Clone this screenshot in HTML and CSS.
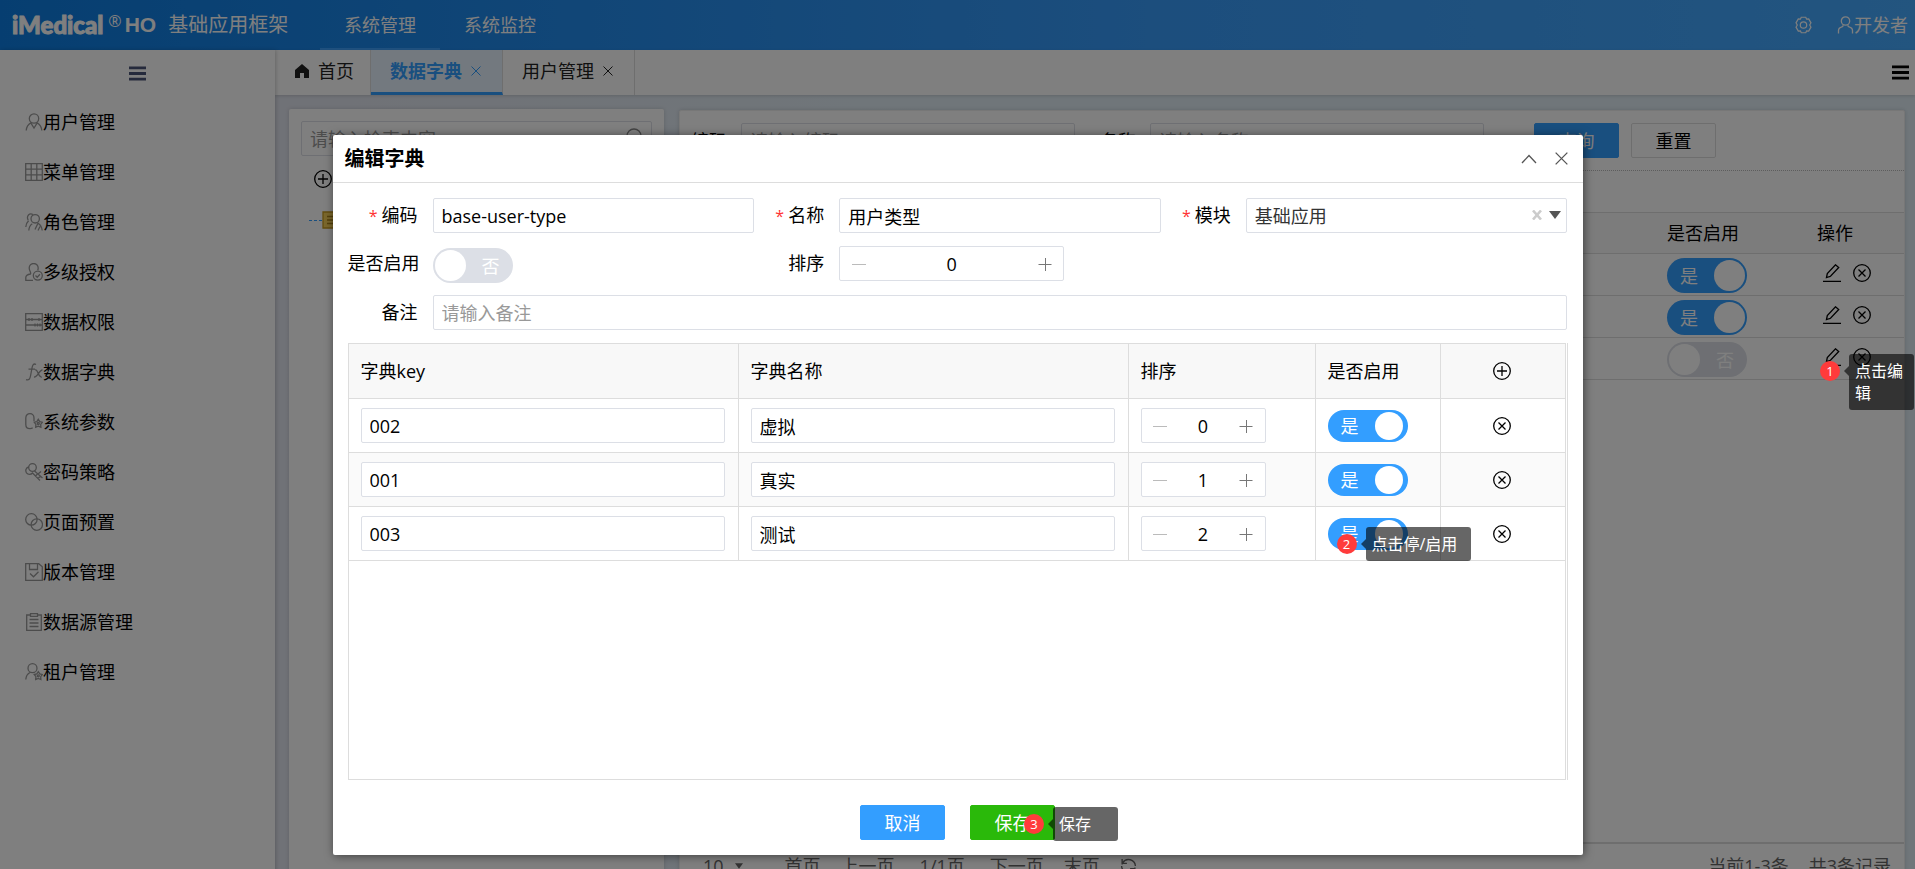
FILE: index.html
```html
<!DOCTYPE html>
<html lang="zh-CN">
<head>
<meta charset="utf-8">
<title>基础应用框架</title>
<link rel="stylesheet" href="styles.css">
</head>
<body>
<svg class="sprite" aria-hidden="true">
  <symbol id="i-user" viewBox="0 0 18 18"><circle cx="9" cy="5.5" r="4.7"/><path d="M1.2 17.5c.4-4 2.200-6.300 4.600-7.600L9 15l3.200-5.100c2.400 1.300 4.200 3.600 4.600 7.600"/></symbol>
  <symbol id="i-grid" viewBox="0 0 18 18"><path d="M.7.7h16.600v16.600H.7zM.7 6.200h16.600M.7 11.800h16.600M6.200.7v16.600M11.800.7v16.600"/></symbol>
  <symbol id="i-roles" viewBox="0 0 18 18"><circle cx="10.200" cy="5.800" r="4.200"/><path d="M3.800 17.500c.2-3.500 1.500-5.500 3.500-6.800M10 16.500l3-6.300c2.200 1.300 3.800 3.600 4.200 7.300M13 17.500l2-4M8 1.500C4.500-.5 1 3 3.200 7.200M.8 14c.3-3 1.200-4.800 2.800-6.200"/></symbol>
  <symbol id="i-auth" viewBox="0 0 18 18"><path d="M8 17.300H.8v-2.800c0-2 1.500-3 4.700-3.500C6.500 9.500 4.200 8 4.200 5a4.500 4.500 0 0 1 9 0c0 .8-.2 1.500-.4 2.200"/><circle cx="12.800" cy="12.600" r="4.500"/><path d="M10.500 12.500l1.700 1.700 2.800-3"/></symbol>
  <symbol id="i-data" viewBox="0 0 18 18"><path d="M.7.7h16.600v16.600H.7zM.7 6.500h16.600M.7 12h16.600M4 5v3M7 5v3M14 5v3M10 10.500v3M12.500 10.500v3M15 10.500v3"/></symbol>
  <symbol id="i-fx" viewBox="0 0 18 18"><path d="M11 1.500C8.500 0 7.500 2 7 5L5.500 13c-.5 3-1.500 4.500-4.500 3.600M3.500 6.200H10M10 7c3-1.500 3 8 6.800 7M17.500 7c-3-.5-5 7.500-8.500 7"/></symbol>
  <symbol id="i-param" viewBox="0 0 18 18"><path d="M9 8V5c0-2.700-1.600-4.300-4-4.300S.8 2.300.8 5v6.500c0 2.700 1.600 4.200 4.200 4.200 1.200 0 2-.3 2.700-.9"/><path d="M13.300 6.300l1.500 2.300 2.600.6-1.700 2.200.2 2.800-2.600-1-2.600 1 .2-2.800-1.700-2.200 2.600-.6z"/><circle cx="13.300" cy="10.500" r="1"/></symbol>
  <symbol id="i-key" viewBox="0 0 18 18"><circle cx="7.500" cy="4.500" r="3.800"/><path d="M9.500 8L17.500 15M13 11l3-2.500M4 4C1 4.500 0 7.500 1.500 9.800c1.500 2 4.500 2 6 .2l7.500 7.500M10.500 13l2.500-2.500M13 15.500l2.300-2.300"/></symbol>
  <symbol id="i-rings" viewBox="0 0 18 18"><circle cx="6.400" cy="6.400" r="5.700"/><circle cx="11.800" cy="11.600" r="5.700"/></symbol>
  <symbol id="i-save" viewBox="0 0 18 18"><path d="M.7.7h13l3.600 3v13.600H.7zM4.500.7v5.800h8V.7M5 10.500l3.500 3.300 5-5"/></symbol>
  <symbol id="i-clip" viewBox="0 0 18 18"><path d="M5.500 2H1.700v15.300h14.600V2h-3.800M5.500.7h7v2.600h-7zM4.500 6.500h9M4.500 10h9M4.500 13.500h9"/></symbol>
  <symbol id="i-tenant" viewBox="0 0 18 18"><circle cx="7.500" cy="5.200" r="4.500"/><path d="M.8 16.500c.2-3.500 1.500-5.500 4.200-7M13.300 8.600l1.500 2.300 2.600.6-1.700 2.200.2 2.800-2.600-1-2.600 1 .2-2.800-1.700-2.200 2.600-.6z"/><circle cx="13.300" cy="12.800" r="1"/></symbol>
  <symbol id="i-plus-o" viewBox="0 0 18 18"><circle cx="9" cy="9" r="8.300"/><path d="M9 4v10M4 9h10"/></symbol>
  <symbol id="i-x-o" viewBox="0 0 18 18"><circle cx="9" cy="9" r="8.300"/><path d="M5.500 5.500l7 7M12.500 5.500l-7 7"/></symbol>
  <symbol id="i-edit" viewBox="0 0 18 18"><path d="M0 17.300h18M3.500 13.500l.8-4L12.500.8l3.200 2.700-8.200 8.800zM3.500 13.500l4-1.200"/></symbol>
  <symbol id="i-x" viewBox="0 0 10 10"><path d="M.5.5l9 9M9.500.5l-9 9"/></symbol>
  <symbol id="i-clear" viewBox="0 0 10 10"><path stroke-width="2.600" d="M1 0.500l8 9M9 0.500l-8 9"/></symbol>
  <symbol id="i-up" viewBox="0 0 16 10"><path d="M1 9l7-7.500L15 9"/></symbol>
  <symbol id="i-bars" viewBox="0 0 18 15"><path d="M0 1.500h18M0 7.500h18M0 13.500h18"/></symbol>
  <symbol id="i-home" viewBox="0 0 14 14"><path d="M7 0L0 6v8h5V9h4v5h5V6z"/></symbol>
  <symbol id="i-minus" viewBox="0 0 14 14"><path d="M0 7.500h14"/></symbol>
  <symbol id="i-plus" viewBox="0 0 14 14"><path d="M.5 7.500h13M7.500 1v13"/></symbol>
  <symbol id="i-caret" viewBox="0 0 12 8"><path d="M0 0h12L6 8z"/></symbol>
  <symbol id="i-gear" viewBox="0 0 18 18"><path d="M6.600.8h4.800l.9 2 2.200-.2 2.400 4.100L15.600 9l1.300 2.300-2.400 4.100-2.200-.2-.9 2H6.600l-.9-2-2.200.2-2.400-4.100L2.400 9 1.100 6.700l2.400-4.100 2.200.2z"/><circle cx="9" cy="9" r="3.400"/></symbol>
  <symbol id="i-person" viewBox="0 0 16 18"><circle cx="8" cy="5" r="4.200"/><path d="M1 17.500v-3c0-2 1.500-3.200 3.500-3.700L6 9.500M15 17.500v-3c0-2-1.500-3.200-3.500-3.700L10 9.500"/></symbol>
  <symbol id="i-search" viewBox="0 0 18 18"><circle cx="8" cy="8" r="7"/><path d="M13 13l4.500 4.500"/></symbol>
  <symbol id="i-refresh" viewBox="0 0 16 16"><path d="M2 6.500V1.500M2 5.500h4.500M2.500 5A6.500 6.500 0 0 1 14.500 8M14 9.500v5M14 10.500H9.500M13.500 11A6.500 6.500 0 0 1 1.500 8"/></symbol>
  <symbol id="i-folder" viewBox="0 0 20 18"><path class="folder-back" d="M1 1h18v16H1z"/><path class="folder-lines" d="M5 5.500h10M5 9h10M5 12.500h10"/></symbol>
</svg>

<div class="app">
  <header class="topbar">
    <div class="brand"><span class="brand-name">iMedical</span><sup class="brand-reg">®</sup><span class="brand-sub">HO</span><span class="brand-title">基础应用框架</span></div>
    <nav class="topnav"><a class="on" href="#">系统管理</a><a href="#">系统监控</a></nav>
    <div class="top-tools">
      <button class="plain" aria-label="设置"><svg class="ico16"><use href="#i-gear"/></svg></button>
      <a class="account" href="#"><svg class="ico16"><use href="#i-person"/></svg>开发者</a>
    </div>
  </header>

  <div class="main">
    <aside class="sidebar">
      <button class="plain side-toggle" aria-label="折叠菜单"><svg class="bars"><use href="#i-bars"/></svg></button>
      <nav class="side-nav">
        <a href="#"><svg class="ico"><use href="#i-user"/></svg>用户管理</a>
        <a href="#"><svg class="ico"><use href="#i-grid"/></svg>菜单管理</a>
        <a href="#"><svg class="ico"><use href="#i-roles"/></svg>角色管理</a>
        <a href="#"><svg class="ico"><use href="#i-auth"/></svg>多级授权</a>
        <a href="#"><svg class="ico"><use href="#i-data"/></svg>数据权限</a>
        <a href="#"><svg class="ico"><use href="#i-fx"/></svg>数据字典</a>
        <a href="#"><svg class="ico"><use href="#i-param"/></svg>系统参数</a>
        <a href="#"><svg class="ico"><use href="#i-key"/></svg>密码策略</a>
        <a href="#"><svg class="ico"><use href="#i-rings"/></svg>页面预置</a>
        <a href="#"><svg class="ico"><use href="#i-save"/></svg>版本管理</a>
        <a href="#"><svg class="ico"><use href="#i-clip"/></svg>数据源管理</a>
        <a href="#"><svg class="ico"><use href="#i-tenant"/></svg>租户管理</a>
      </nav>
    </aside>

    <div class="workspace">
      <div class="tabs">
        <a class="tab home" href="#"><svg class="ico-home"><use href="#i-home"/></svg>首页</a>
        <a class="tab active" href="#">数据字典<svg class="ico-x"><use href="#i-x"/></svg></a>
        <a class="tab" href="#">用户管理<svg class="ico-x"><use href="#i-x"/></svg></a>
        <button class="plain tabs-menu" aria-label="标签菜单"><svg class="bars"><use href="#i-bars"/></svg></button>
      </div>

      <div class="panels">
        <section class="panel tree-panel">
          <div class="search"><input class="field" type="text" placeholder="请输入检索内容" aria-label="检索"><svg class="ico"><use href="#i-search"/></svg></div>
          <button class="plain tree-add" aria-label="新增"><svg class="ico"><use href="#i-plus-o"/></svg></button>
          <div class="tree-node"><svg class="ico-folder"><use href="#i-folder"/></svg></div>
        </section>

        <section class="panel list-panel">
          <form class="filter">
            <label for="q-code">编码</label><input class="field" id="q-code" type="text" placeholder="请输入编码">
            <label class="second" for="q-name">名称</label><input class="field" id="q-name" type="text" placeholder="请输入名称">
            <button class="btn primary query" type="button">查询</button>
            <button class="btn" type="button">重置</button>
          </form>
          <table class="list">
            <colgroup><col><col class="c-on"><col class="c-act"></colgroup>
            <thead><tr><th></th><th>是否启用</th><th>操作</th></tr></thead>
            <tbody>
              <tr><td></td><td><label class="switch"><input type="checkbox" checked><span>是</span></label></td><td><div class="acts"><button class="plain" aria-label="编辑"><svg class="ico"><use href="#i-edit"/></svg></button><button class="plain" aria-label="删除"><svg class="ico"><use href="#i-x-o"/></svg></button></div></td></tr>
              <tr><td></td><td><label class="switch"><input type="checkbox" checked><span>是</span></label></td><td><div class="acts"><button class="plain" aria-label="编辑"><svg class="ico"><use href="#i-edit"/></svg></button><button class="plain" aria-label="删除"><svg class="ico"><use href="#i-x-o"/></svg></button></div></td></tr>
              <tr><td></td><td><label class="switch"><input type="checkbox"><span>否</span></label></td><td><div class="acts"><button class="plain" aria-label="编辑"><svg class="ico"><use href="#i-edit"/></svg></button><button class="plain" aria-label="删除"><svg class="ico"><use href="#i-x-o"/></svg></button></div></td></tr>
            </tbody>
          </table>
          <footer class="pager">
            <button class="plain size">10<svg class="ico-caret"><use href="#i-caret"/></svg></button>
            <a href="#">首页</a><a href="#">上一页</a><span class="count">1/1页</span><a href="#">下一页</a><a href="#">末页</a>
            <button class="plain" aria-label="刷新"><svg class="ico16"><use href="#i-refresh"/></svg></button>
            <span class="total">当前1-3条</span><span>共3条记录</span>
          </footer>
        </section>
      </div>
    </div>
  </div>
</div>

<div class="overlay">
  <div class="modal" role="dialog" aria-labelledby="dlg-title">
    <header class="modal-head">
      <h2 id="dlg-title">编辑字典</h2>
      <button class="plain" aria-label="收起"><svg class="ico-up"><use href="#i-up"/></svg></button>
      <button class="plain" aria-label="关闭"><svg class="ico-close"><use href="#i-x"/></svg></button>
    </header>
    <div class="modal-body">
      <form class="form">
        <div class="item"><label class="req" for="f-code">编码</label><input class="field" id="f-code" type="text" value="base-user-type"></div>
        <div class="item"><label class="req" for="f-name">名称</label><input class="field" id="f-name" type="text" value="用户类型"></div>
        <div class="item"><label class="req" for="f-mod">模块</label><div class="select"><select class="field" id="f-mod"><option>基础应用</option></select><svg class="ico-clear"><use href="#i-clear"/></svg><svg class="ico-caret"><use href="#i-caret"/></svg></div></div>
        <div class="item"><label for="f-on">是否启用</label><span class="switch low"><input id="f-on" type="checkbox"><span>否</span></span></div>
        <div class="item"><label for="f-sort">排序</label><div class="stepper wide"><button class="plain minus" type="button" aria-label="减"><svg><use href="#i-minus"/></svg></button><input id="f-sort" type="text" value="0"><button class="plain" type="button" aria-label="加"><svg><use href="#i-plus"/></svg></button></div></div>
        <div class="item full"><label for="f-note">备注</label><input class="field" id="f-note" type="text" placeholder="请输入备注"></div>
      </form>

      <div class="grid-outer"><div class="grid-inner">
        <table class="entries">
          <colgroup><col><col><col class="c-sort"><col class="c-flag"><col class="c-op"></colgroup>
          <thead><tr><th>字典key</th><th>字典名称</th><th>排序</th><th>是否启用</th><th class="mid"><button class="plain" aria-label="新增"><svg class="ico"><use href="#i-plus-o"/></svg></button></th></tr></thead>
          <tbody>
            <tr>
              <td><input class="field" type="text" value="002" aria-label="字典key"></td>
              <td><input class="field" type="text" value="虚拟" aria-label="字典名称"></td>
              <td><div class="stepper"><button class="plain minus" aria-label="减"><svg><use href="#i-minus"/></svg></button><input type="text" value="0" aria-label="排序"><button class="plain" aria-label="加"><svg><use href="#i-plus"/></svg></button></div></td>
              <td><div class="anchor"><label class="switch slim"><input type="checkbox" checked><span>是</span></label></div></td>
              <td class="mid"><button class="plain" aria-label="删除"><svg class="ico"><use href="#i-x-o"/></svg></button></td>
            </tr>
            <tr>
              <td><input class="field" type="text" value="001" aria-label="字典key"></td>
              <td><input class="field" type="text" value="真实" aria-label="字典名称"></td>
              <td><div class="stepper"><button class="plain minus" aria-label="减"><svg><use href="#i-minus"/></svg></button><input type="text" value="1" aria-label="排序"><button class="plain" aria-label="加"><svg><use href="#i-plus"/></svg></button></div></td>
              <td><div class="anchor"><label class="switch slim"><input type="checkbox" checked><span>是</span></label></div></td>
              <td class="mid"><button class="plain" aria-label="删除"><svg class="ico"><use href="#i-x-o"/></svg></button></td>
            </tr>
            <tr>
              <td><input class="field" type="text" value="003" aria-label="字典key"></td>
              <td><input class="field" type="text" value="测试" aria-label="字典名称"></td>
              <td><div class="stepper"><button class="plain minus" aria-label="减"><svg><use href="#i-minus"/></svg></button><input type="text" value="2" aria-label="排序"><button class="plain" aria-label="加"><svg><use href="#i-plus"/></svg></button></div></td>
              <td><div class="anchor"><label class="switch slim"><input type="checkbox" checked><span>是</span></label><div class="tip tip-toggle"><b>2</b><span>点击停/启用</span></div></div></td>
              <td class="mid"><button class="plain" aria-label="删除"><svg class="ico"><use href="#i-x-o"/></svg></button></td>
            </tr>
          </tbody>
        </table>
      </div></div>

      <div class="modal-foot">
        <button class="btn primary">取消</button>
        <div class="anchor"><button class="btn save">保存</button><div class="tip tip-save"><b>3</b><span>保存</span></div></div>
      </div>
    </div>
  </div>
</div>
<div class="tip tip-edit"><b>1</b><span>点击编辑</span></div>
</body>
</html>
```

FILE: styles.css
```css
* { box-sizing: border-box; }

body {
  margin: 0;
  height: 100vh;
  overflow: hidden;
  position: relative;
  font: 18px/24px "Open Sans", "Noto Sans CJK SC", sans-serif;
  color: #000;
}

a { color: inherit; text-decoration: none; }
input, select, button { font: inherit; color: inherit; }
svg { display: block; fill: none; stroke: currentColor; stroke-width: 1.3; }

.sprite { position: absolute; width: 0; height: 0; }
.ico { width: 18px; height: 18px; flex: none; }
.ico16 { width: 17px; height: 18px; flex: none; }
.plain { border: 0; padding: 0; background: none; display: inline-flex; align-items: center; justify-content: center; }

.field {
  width: 100%;
  min-width: 0;
  height: 35px;
  padding: 0 8px;
  border: 1px solid #dcdfe6;
  border-radius: 2px;
  background: #fff;
  outline: 0;
}
.field::placeholder { color: #999; opacity: 1; }

.btn {
  width: 85px;
  height: 35px;
  padding: 0;
  border: 1px solid #ddd;
  border-radius: 2px;
  background: #fff;
}
.btn.primary { background: #339eff; border-color: #339eff; color: #fff; }
.btn.save { background: #2ab90a; border-color: #2ab90a; color: #fff; }

/* switch */
.switch { display: inline-grid; width: 80px; height: 35px; vertical-align: top; }
.switch input, .switch > span { grid-area: 1 / 1; }
.switch input {
  appearance: none;
  margin: 0;
  padding: 2px;
  border-radius: 18px;
  background: #dcdfe6;
  display: flex;
}
.switch input::before { content: ""; height: 100%; aspect-ratio: 1; border-radius: 50%; background: #fff; }
.switch input:checked { background: #339eff; justify-content: flex-end; }
.switch > span { color: #fff; align-self: center; justify-self: end; padding-right: 13px; pointer-events: none; }
.switch input:checked + span { justify-self: start; padding: 0 0 0 13px; }
.switch.slim { height: 32px; }
.switch.slim input { padding-right: 5px; }
.switch.low { margin-top: 2px; }

/* number stepper */
.stepper { display: flex; width: 125px; height: 35px; border: 1px solid #dcdfe6; border-radius: 2px; background: #fff; }
.stepper.wide { width: 225px; }
.stepper button { width: 37px; flex: none; color: #777; }
.stepper .minus { color: #bbb; }
.stepper svg { width: 14px; height: 14px; stroke-width: 1px; }
.stepper input { flex: 1; min-width: 0; border: 0; padding: 0; text-align: center; background: none; outline: 0; }

/* top bar */
.app { display: flex; flex-direction: column; height: calc(100vh + 20px); }
.topbar {
  flex: none;
  display: flex;
  height: 50px;
  align-items: center;
  padding: 0 7px 0 12px;
  color: #fff;
  background: linear-gradient(90deg, #0d7de2, #389cfb 60%, #46aaff);
}
.brand { display: flex; align-items: center; width: 308px; }
.brand-name { font: 900 24px/24px Lato, sans-serif; -webkit-text-stroke: 1px #fff; }
.brand-reg { font-size: 16px; line-height: 16px; align-self: flex-start; margin-left: 5px; }
.brand-sub { font: bold 21px/24px "Liberation Sans", sans-serif; margin-left: 3px; }
.brand-title { font-size: 20px; margin-left: 12px; }
.topnav { display: flex; height: 100%; }
.topnav a { display: flex; align-items: center; width: 120px; justify-content: center; border-top: 2px solid transparent; border-bottom: 2px solid transparent; }
.topnav .on { border-bottom-color: #40a2ff; }
.top-tools { display: flex; align-items: center; gap: 25px; margin-left: auto; }
.account { display: flex; align-items: center; }

/* side bar */
.main { flex: 1; min-height: 0; display: flex; }
.sidebar { width: 275px; flex: none; background: #fff; box-shadow: 1px 0 4px rgba(0, 0, 0, .2); position: relative; }
.side-toggle { display: flex; margin: 16px auto 0; color: #4b5478; }
.bars { width: 17px; height: 15px; stroke-width: 3px; }
.side-nav { margin-top: 16px; }
.side-nav a { display: flex; align-items: center; height: 50px; padding-left: 25px; }
.side-nav svg { color: #999; }

/* tabs */
.workspace { flex: 1; min-width: 0; display: flex; flex-direction: column; background: linear-gradient(90deg, #e1e4ee, #e1edf5 40%); }
.tabs { display: flex; flex: none; height: 45px; background: #fff; box-shadow: 0 1px 3px rgba(0, 0, 0, .15); color: #222; }
.tab { display: flex; align-items: center; gap: 9px; padding: 0 21px 3px 19px; border-right: 1px solid #ddd; }
.tab.home { padding-left: 20px; padding-right: 16px; }
.tab.active { color: #339eff; background: #e6f3ff; font-weight: bold; padding-bottom: 0; border-bottom: 3px solid #339eff; }
.ico-home { width: 14px; height: 14px; fill: currentColor; stroke: none; }
.ico-x { width: 10px; height: 10px; stroke-width: 1px; }
.tabs-menu { margin: 0 6px 0 auto; color: #000; }

/* panels */
.panels { flex: 1; min-height: 0; display: flex; gap: 15px; padding: 14px 10px 0 14px; }
.panel { background: #fff; border-radius: 2px; box-shadow: 0 0 4px rgba(0, 0, 0, .15); }
.tree-panel { width: 375px; flex: none; padding: 12px; }
.search { position: relative; }
.search svg { position: absolute; right: 8px; top: 7px; color: #888; }
.tree-add { display: flex; margin: 14px 0 0 13px; }
.tree-node { display: flex; align-items: center; margin: 23px 0 0 8px; }
.tree-node::before { content: ""; width: 13px; border-top: 1px dashed #339eff; }
.ico-folder { width: 20px; height: 18px; }
.folder-back { fill: #f5cf58; stroke: #c89a1e; }
.folder-lines { stroke: #a8801a; }

.list-panel { flex: 1; min-width: 0; display: flex; flex-direction: column; margin-top: 1px; border: 1px solid #eee; }
.filter { display: flex; align-items: center; padding: 12px 11px 12px; border-bottom: 1px dotted #bbb; }
.filter label { margin-right: 14px; white-space: nowrap; }
.filter .second { margin-left: 25px; }
.filter .field { width: 334px; }
.filter .query { margin: 0 12px 0 50px; }

.list { width: 100%; table-layout: fixed; border-collapse: collapse; margin-top: 41px; }
.c-on { width: 150px; }
.c-act { width: 97px; }
.list th { height: 41px; font-weight: normal; text-align: left; background: #f9f9f9; padding: 0 10px; border: solid #ddd; border-width: 1px 0; }
.list td { height: 42px; padding: 2px 10px 0; border-bottom: 1px solid #ddd; }
.acts { display: flex; gap: 12px; padding: 0 0 6px 6px; }

.pager { display: flex; align-items: center; height: 46px; margin-top: auto; padding: 0 13px 0 23px; border-top: 2px solid #ddd; color: #666; gap: 20px; }
.pager .size { gap: 11px; margin-right: 22px; }
.pager .count { margin: 0 5px; }
.pager .total { margin-left: auto; }
.ico-caret { width: 12px; height: 8px; fill: currentColor; stroke: none; }
.pager .ico-caret { width: 8px; height: 6px; }

/* dialog */
.overlay { position: absolute; inset: 0; background: rgba(0, 0, 0, .5); padding-top: 135px; display: flex; justify-content: center; align-items: flex-start; }
.modal { width: 1250px; background: #fff; border-radius: 2px; box-shadow: 1px 1px 10px rgba(0, 0, 0, .5); }
.modal-head { display: flex; align-items: center; gap: 18px; height: 48px; padding: 0 15px 0 12px; border-bottom: 1px solid #ddd; color: #555; }
.modal-head h2 { margin: 0 auto 0 0; font-size: 20px; line-height: 24px; color: #000; }
.ico-up { width: 16px; height: 10px; }
.ico-close { width: 13px; height: 13px; stroke-width: 1px; }
.modal-body { padding: 15px; }

.form { display: grid; grid-template-columns: repeat(3, 1fr); row-gap: 12px; }
.item { display: flex; align-items: flex-start; }
.item > label { flex: none; width: 85px; padding-right: 15px; text-align: right; line-height: 35px; white-space: nowrap; }
.req::before { content: "*"; color: #f33; margin-right: 4px; font-size: 16px; }
.item.full { grid-column: 1 / -1; }
.select { position: relative; flex: 1; min-width: 0; }
.select select { appearance: none; color: #333; }
.select svg { position: absolute; }
.select .ico-caret { right: 6px; top: 13px; color: #555; }
.ico-clear { width: 10px; height: 10px; right: 25px; top: 12px; color: #ccc; }

.grid-outer { margin-top: 13px; padding-right: 1px; border-right: 1px solid #ddd; }
.grid-inner { min-height: 437px; border: 1px solid #ddd; }
.entries { width: 100%; table-layout: fixed; border-collapse: separate; border-spacing: 0; }
.c-sort { width: 187px; }
.c-flag { width: 125px; }
.c-op { width: 124px; }
.entries th, .entries td { padding: 0 13px 0 12px; border: solid #ddd; border-width: 0 1px 1px 0; text-align: left; font-weight: normal; }
.entries th { height: 55px; background: #f8f8f8; }
.entries td { height: 54px; }
.entries tr > :last-child { border-right: 0; }
.entries tbody tr:nth-child(even) { background: #fafafa; }
.entries .mid { text-align: center; line-height: 0; }
.entries .field, .entries .plain, .entries .switch { vertical-align: middle; }

.modal-foot { display: flex; justify-content: center; gap: 25px; margin-top: 25px; }
.anchor { position: relative; display: flex; }

/* step callouts */
.tip { position: absolute; z-index: 2; display: flex; align-items: center; font-size: 16px; line-height: 22px; color: #fff; white-space: nowrap; }
.tip b { width: 20px; height: 20px; border-radius: 50%; background: #ff3b3b; font-size: 13px; font-weight: normal; line-height: 20px; text-align: center; flex: none; }
.tip::before { content: ""; order: 1; margin-left: 4px; border: solid transparent; border-width: 5px 5px 5px 0; border-right-color: rgba(0, 0, 0, .6); }
.tip span { order: 2; padding: 6px; border-radius: 3px; background: rgba(0, 0, 0, .6); }
.tip-toggle { left: 9px; top: 9px; }
.tip-toggle span { width: 105px; }
.tip-save { left: 54px; top: 2px; }
.tip-save span { width: 65px; }
.tip-edit { right: 1px; top: 354px; align-items: flex-start; }
.tip-edit b { margin-top: 7px; }
.tip-edit::before { margin-top: 12px; }
.tip-edit span { width: 65px; white-space: normal; }
```
